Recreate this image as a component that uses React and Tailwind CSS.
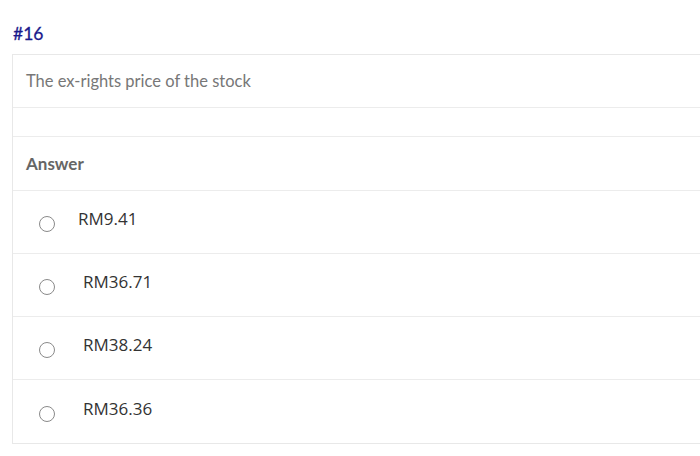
import React from "react";

const answers = [
  { label: "RM9.41", pad: "pl-[23px]" },
  { label: "RM36.71", pad: "pl-[28px]" },
  { label: "RM38.24", pad: "pl-[28px]" },
  { label: "RM36.36", pad: "pl-[28px]" },
];

export default function App() {
  return (
    <div className="w-[700px] h-[456px] overflow-hidden bg-white" style={{ fontFamily: "Lato, 'Open Sans', sans-serif" }}>
      <div className="pt-[21px] pl-[13px] h-[54px]">
        <span className="text-[17.5px] text-[#1a1a8c]" style={{ WebkitTextStroke: "0.3px #1a1a8c" }}>#16</span>
      </div>

      {/* question box */}
      <div className="ml-[12px] w-[720px] border border-[#e8e8e8]">
        <div className="h-[53px] flex items-center pl-[13px] border-b border-[#ececec]">
          <span className="text-[16.5px] text-[#777]">The ex-rights price of the stock</span>
        </div>
        <div className="h-[29px] border-b border-[#ececec]"></div>
        <div className="h-[54px] flex items-center pl-[13px] border-b border-[#ececec]">
          <span className="text-[17px] font-bold text-[#666]">Answer</span>
        </div>
        {answers.map((a, i) => (
          <div
            key={a.label}
            className={`h-[63px] flex items-center pl-[26px] ${i < answers.length - 1 ? "border-b border-[#ececec]" : ""}`}
          >
            <span className="mt-[4px] w-[16px] h-[16px] rounded-full border border-[#8a8a8a] bg-white shrink-0"></span>
            <span className={`${a.pad} mb-[6px] text-[17px] text-[#333]`} style={{ fontFamily: "'Open Sans', sans-serif" }}>
              {a.label}
            </span>
          </div>
        ))}
      </div>
    </div>
  );
}
